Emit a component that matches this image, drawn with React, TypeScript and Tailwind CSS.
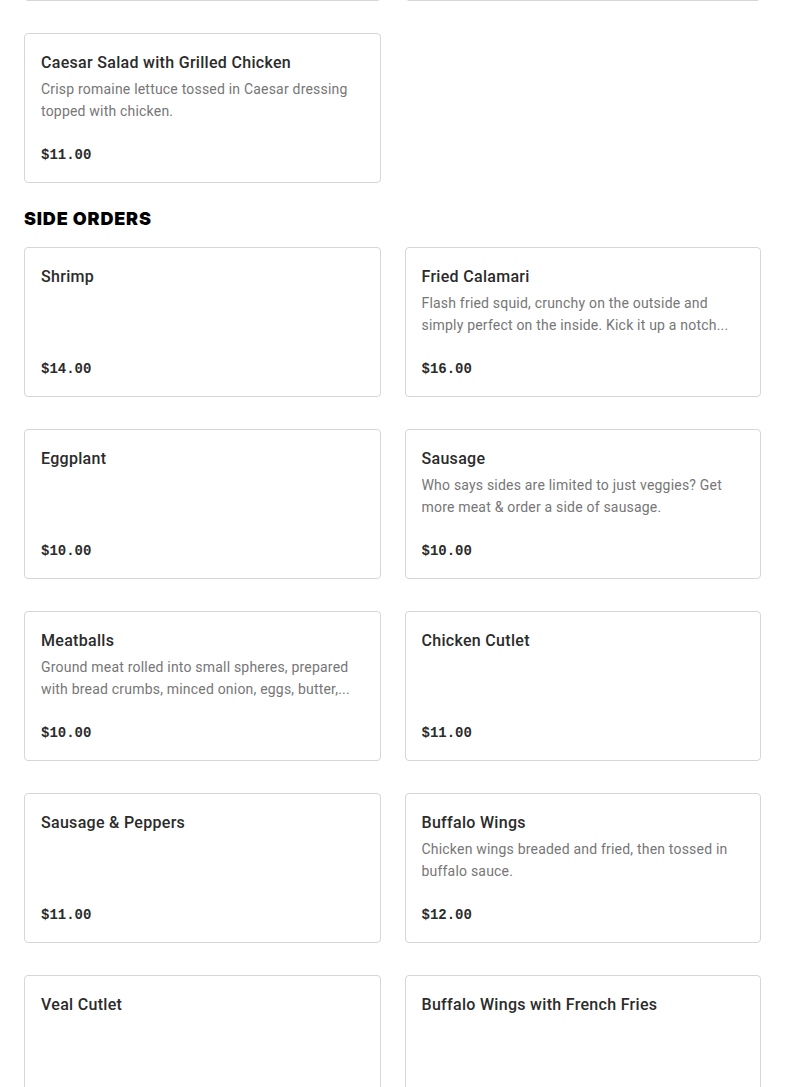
import React from "react";

type Item = { name: string; desc?: string; price: string };

const caesar: Item = {
  name: "Caesar Salad with Grilled Chicken",
  desc: "Crisp romaine lettuce tossed in Caesar dressing topped with chicken.",
  price: "$11.00",
};

const sides: Item[] = [
  { name: "Shrimp", price: "$14.00" },
  {
    name: "Fried Calamari",
    desc: "Flash fried squid, crunchy on the outside and simply perfect on the inside. Kick it up a notch...",
    price: "$16.00",
  },
  { name: "Eggplant", price: "$10.00" },
  {
    name: "Sausage",
    desc: "Who says sides are limited to just veggies? Get more meat & order a side of sausage.",
    price: "$10.00",
  },
  {
    name: "Meatballs",
    desc: "Ground meat rolled into small spheres, prepared with bread crumbs, minced onion, eggs, butter,...",
    price: "$10.00",
  },
  { name: "Chicken Cutlet", price: "$11.00" },
  { name: "Sausage & Peppers", price: "$11.00" },
  {
    name: "Buffalo Wings",
    desc: "Chicken wings breaded and fried, then tossed in buffalo sauce.",
    price: "$12.00",
  },
  { name: "Veal Cutlet", price: "$13.00" },
  { name: "Buffalo Wings with French Fries", price: "$14.00" },
];

function Card({ item }: { item: Item }) {
  return (
    <div className="flex h-[150px] flex-col rounded-[4px] border border-[#d6d6d6] bg-white px-4 pt-[17px] pb-[15px]">
      <div
        className="text-[16px] font-medium leading-6 tracking-[0.3px] text-[#2b2b2b]"
        style={{ fontFamily: "Roboto, sans-serif" }}
      >
        {item.name}
      </div>
      {item.desc ? (
        <div
          className="mt-[3px] line-clamp-2 text-[14px] leading-[22px] tracking-[0.2px] text-[#767676]"
          style={{ fontFamily: "Roboto, sans-serif" }}
        >
          {item.desc}
        </div>
      ) : null}
      <div
        className="mt-auto text-[14px] font-bold leading-6 text-[#2b2b2b]"
        style={{ fontFamily: '"Liberation Mono", monospace' }}
      >
        {item.price}
      </div>
    </div>
  );
}

export default function App() {
  return (
    <div className="min-h-[1087px] bg-white px-6">
      <div className="-mt-[149px] grid grid-cols-2 gap-x-6 gap-y-8">
        <div className="h-[150px] rounded-[4px] border border-[#d6d6d6] bg-white" />
        <div className="h-[150px] rounded-[4px] border border-[#d6d6d6] bg-white" />
        <Card item={caesar} />
      </div>
      <h2
        className="mt-6 mb-4 text-[18px] font-black uppercase leading-6 tracking-[0.8px] text-black"
        style={{ fontFamily: "Inter, sans-serif" }}
      >
        Side Orders
      </h2>
      <div className="grid grid-cols-2 gap-x-6 gap-y-8 pb-10">
        {sides.map((it) => (
          <Card key={it.name} item={it} />
        ))}
      </div>
    </div>
  );
}
